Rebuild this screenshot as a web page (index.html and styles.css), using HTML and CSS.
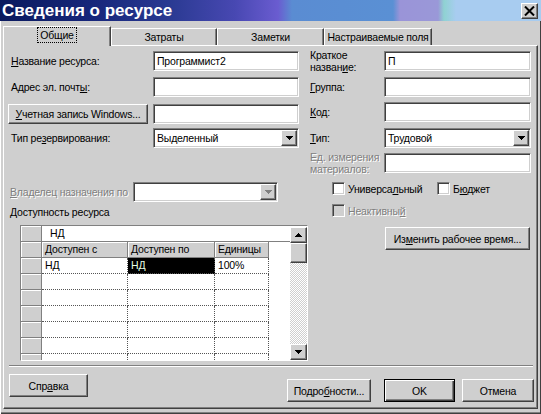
FILE: index.html
```html
<!DOCTYPE html>
<html lang="ru">
<head>
<meta charset="utf-8">
<title>Сведения о ресурсе</title>
<link rel="stylesheet" href="styles.css">
</head>
<body>
<div class="dialog">
  <div class="titlebar">
    <span class="title">Сведения о ресурсе</span>
    <span class="close raised"><svg width="11" height="10" viewBox="0 0 11 10"><path d="M1 0.5L10 9.5M10 0.5L1 9.5" stroke="#000" stroke-width="2"/></svg></span>
  </div>
  <div class="frame">
    <div class="tabs">
      <div class="tab active t1"><span class="focus">Общие</span></div>
      <div class="tab t2">Затраты</div>
      <div class="tab t3">Заметки</div>
      <div class="tab t4">Настраиваемые поля</div>
    </div>
    <div class="panel">
      <div class="content">
        <div class="col-left">
          <div class="form form-left">
            <span class="lbl"><span><u>Н</u>азвание ресурса:</span></span><div class="field"><span>Программист2</span></div>
            <span class="lbl"><span>Адрес эл. почт<u>ы</u>:</span></span><div class="field"></div>
            <span class="lbl"><span class="btn raised btn-win"><span><u>У</u>четная запись Windows...</span></span></span><div class="field"></div>
            <span class="lbl"><span>Тип ре<u>з</u>ервирования:</span></span><div class="field select"><span>Выделенный</span><span class="drop raised"><svg width="7" height="4" viewBox="0 0 7 4"><path d="M0 0h7v1H0zM1 1h5v1H1zM2 2h3v1H2zM3 3h1v1H3z"/></svg></span></div>
          </div>
          <div class="owner-row">
            <span class="owner-lbl disabled"><u>В</u>ладелец назначения по</span>
            <div class="field select owner-sel"><span class="drop raised"><svg width="7" height="4" viewBox="0 0 7 4"><path fill="#808080" d="M0 0h7v1H0zM1 1h5v1H1zM2 2h3v1H2zM3 3h1v1H3z"/></svg></span></div>
          </div>
          <div class="avail-label"><u>Д</u>оступность ресурса</div>
          <div class="avail">
            <div class="sheet">
              <div class="rh"></div><div class="editbar">НД</div>
              <div class="rh"></div><div class="hd">Доступен с</div><div class="hd">Доступен по</div><div class="hd">Единицы</div><div class="blank"></div>
              <div class="rh"></div><div class="cell">НД</div><div class="cell sel">НД</div><div class="cell">100%</div><div class="blank"></div>
              <div class="rh"></div><div class="cell"></div><div class="cell"></div><div class="cell"></div><div class="blank"></div>
              <div class="rh"></div><div class="cell"></div><div class="cell"></div><div class="cell"></div><div class="blank"></div>
              <div class="rh"></div><div class="cell"></div><div class="cell"></div><div class="cell"></div><div class="blank"></div>
              <div class="rh"></div><div class="cell"></div><div class="cell"></div><div class="cell"></div><div class="blank"></div>
              <div class="rh"></div><div class="cell"></div><div class="cell"></div><div class="cell"></div><div class="blank"></div>
              <div class="rh"></div><div class="cell"></div><div class="cell"></div><div class="cell"></div><div class="blank"></div>
            </div>
            <div class="vscroll">
              <span class="sb-btn raised"><svg width="7" height="4" viewBox="0 0 7 4"><path d="M3 0h1v1H3zM2 1h3v1H2zM1 2h5v1H1zM0 3h7v1H0z"/></svg></span>
              <span class="thumb raised"></span>
              <span class="track"></span>
              <span class="sb-btn raised"><svg width="7" height="4" viewBox="0 0 7 4"><path d="M0 0h7v1H0zM1 1h5v1H1zM2 2h3v1H2zM3 3h1v1H3z"/></svg></span>
            </div>
          </div>
        </div>
        <div class="col-right">
          <div class="form form-right">
            <span class="lbl two"><span>Краткое<br>назван<u>и</u>е:</span></span><div class="field"><span>П</span></div>
            <span class="lbl"><span><u>Г</u>руппа:</span></span><div class="field"></div>
            <span class="lbl"><span><u>К</u>од:</span></span><div class="field"></div>
            <span class="lbl"><span><u>Т</u>ип:</span></span><div class="field select"><span>Трудовой</span><span class="drop raised"><svg width="7" height="4" viewBox="0 0 7 4"><path d="M0 0h7v1H0zM1 1h5v1H1zM2 2h3v1H2zM3 3h1v1H3z"/></svg></span></div>
            <span class="lbl two disabled"><span>Ед. измерения<br>материалов:</span></span><div class="field"></div>
          </div>
          <div class="checks">
            <span class="check first"><span class="cb"></span><span>Универса<u>л</u>ьный</span></span>
            <span class="check"><span class="cb"></span><span>Б<u>ю</u>джет</span></span>
          </div>
          <div class="checks">
            <span class="check disabled"><span class="cb cb-dis"></span><span>Неактивны<u>й</u></span></span>
          </div>
          <div class="work-row"><span class="btn raised work"><span>Из<u>м</u>енить рабочее время...</span></span></div>
        </div>
      </div>
      <div class="separator"></div>
      <div class="buttons">
        <span class="btn raised b-help"><span>Спр<u>а</u>вка</span></span>
        <span class="btn raised b-more"><span>Подро<u>б</u>ности...</span></span>
        <span class="btn raised b-ok"><span>OK</span></span>
        <span class="btn raised b-cancel"><span>Отмена</span></span>
      </div>
    </div>
  </div>
</div>
</body>
</html>
```

FILE: styles.css
```css
* { box-sizing: border-box; }
html, body { margin: 0; padding: 0; }
body {
  width: 541px;
  height: 414px;
  overflow: hidden;
  background: #cfcfcf;
  font-family: "Liberation Sans", Arial, sans-serif;
  font-size: 10.5px;
  letter-spacing: -0.2px;
  color: #000;
}
u { text-decoration: underline; text-underline-offset: 1px; }

.dialog {
  width: 541px;
  height: 414px;
  display: flex;
  flex-direction: column;
  background: #cfcfcf;
}

/* title bar */
.titlebar {
  height: 21px;
  flex: none;
  display: flex;
  align-items: center;
  padding-left: 2px;
  background: linear-gradient(90deg, #0a1a5e 0, #16267a 90px, #2a3a92 170px, #4848b2 235px, #6a5cd0 278px, #5a8cd2 292px, #5a90d4 393px, #9a94d8 400px, #9a98d8 438px, #8fd2d2 444px, #a8ccf0 456px, #a8ccf0 541px);
}
.title {
  color: #fff;
  font-weight: bold;
  font-size: 17px;
  letter-spacing: 0;
  line-height: 21px;
}
.close {
  margin-left: auto;
  margin-right: 3px;
  width: 17px;
  height: 16px;
  display: flex;
  align-items: center;
  justify-content: center;
}

.raised {
  background: #cfcfcf;
  border: 1px solid;
  border-color: #fff #404040 #404040 #fff;
  box-shadow: inset -1px -1px 0 #808080;
}

.frame {
  flex: 1;
  padding: 0 3px;
  box-shadow: inset 1px 0 0 #fff, inset -1px 0 0 #404040, inset 0 -1px 0 #404040, inset 0 -2px 0 #808080;
}

/* tabs */
.tabs {
  height: 24px;
  display: flex;
  align-items: flex-end;
}
.tab {
  height: 17px;
  line-height: 16px;
  text-align: center;
  border-top: 1px solid #fff;
  border-left: 1px solid #fff;
  border-right: 1px solid #404040;
  box-shadow: inset -1px 0 0 #808080;
  white-space: nowrap;
}
.tab.active {
  height: 20px;
  line-height: 17px;
  margin-bottom: -1px;
  position: relative;
  z-index: 1;
  background: #cfcfcf;
}
.focus {
  outline: 1px dotted #000;
  outline-offset: 1px;
  padding: 0 1px;
}
.t1 { width: 108px; }
.t2 { width: 106px; }
.t3 { width: 107px; }
.t4 { width: 108px; }

/* panel */
.panel {
  height: 364px;
  border-top: 1px solid #fff;
  border-left: 1px solid #fff;
  border-right: 1px solid #404040;
  border-bottom: 1px solid #404040;
  box-shadow: inset -1px -1px 0 #808080;
  display: flex;
  flex-direction: column;
}
.content {
  display: grid;
  grid-template-columns: 306px 1fr;
  padding-top: 5px;
}
.col-left { padding-left: 7px; }

.form {
  display: grid;
  align-items: start;
}
.form-left {
  grid-template-columns: 142px 146px;
  grid-template-rows: 26px 27px 24px 20px;
}
.form-right {
  grid-template-columns: 74px 147px;
  grid-template-rows: 26px 25px 26px 25px 20px;
}
.lbl {
  height: 20px;
  display: flex;
  align-items: center;
  white-space: nowrap;
}
.lbl.two { line-height: 12px; }

.disabled {
  color: #808080;
  text-shadow: 1px 1px 0 #fff;
}

.field {
  height: 20px;
  background: #fff;
  border: 1px solid;
  border-color: #808080 #fff #fff #808080;
  box-shadow: inset 1px 1px 0 #404040, inset -1px -1px 0 #cfcfcf;
  padding: 1px 1px 1px 3px;
  display: flex;
  align-items: center;
  white-space: nowrap;
}
.select { justify-content: space-between; }
.drop {
  width: 16px;
  height: 16px;
  margin-left: auto;
  display: flex;
  align-items: center;
  justify-content: center;
}

.btn {
  display: flex;
  align-items: center;
  justify-content: center;
  white-space: nowrap;
}
.btn-win {
  margin-left: -3px;
  width: 140px;
  height: 20px;
}

.owner-row {
  display: flex;
  margin-top: 34px;
  margin-left: -1px;
  height: 20px;
  align-items: center;
}
.owner-lbl { width: 123px; white-space: nowrap; }
.owner-sel { width: 145px; }

.avail-label {
  margin-top: 4px;
  margin-left: -1px;
  line-height: 13px;
}

/* availability sheet */
.avail {
  margin-top: 6px;
  margin-left: 9px;
  width: 288px;
  height: 136px;
  border: 1px solid;
  border-color: #808080 #fff #fff #808080;
  background: #fff;
  display: flex;
  overflow: hidden;
}
.sheet {
  flex: 1;
  display: grid;
  grid-template-columns: 21px 86px 87px 54px 1fr;
  grid-auto-rows: 16px;
  align-content: start;
  line-height: 15px;
}
.rh {
  background: #cfcfcf;
  border-right: 1px solid #808080;
  border-bottom: 1px solid #808080;
  box-shadow: inset 1px 1px 0 #fff;
}
.editbar {
  grid-column: 2 / -1;
  padding-left: 8px;
  border-bottom: 1px solid #808080;
}
.hd {
  background: #cfcfcf;
  border-right: 1px solid #808080;
  border-bottom: 1px solid #808080;
  box-shadow: inset 1px 1px 0 #fff;
  padding-left: 3px;
  white-space: nowrap;
}
.cell {
  border-right: 1px dotted #555;
  border-bottom: 1px dotted #555;
  padding-left: 3px;
}
.cell.sel {
  background: #000;
  color: #e6ffe6;
}
.blank { background: #fff; }

.vscroll {
  width: 17px;
  flex: none;
  display: flex;
  flex-direction: column;
  padding-top: 1px;
}
.sb-btn {
  height: 16px;
  flex: none;
  display: flex;
  align-items: center;
  justify-content: center;
}
.thumb { height: 20px; flex: none; }
.track {
  flex: 1;
  background: repeating-conic-gradient(#fff 0 25%, #cfcfcf 0 50%) 0 0 / 2px 2px;
}

/* right column */
.checks {
  display: flex;
  align-items: center;
  margin-top: 9px;
  padding-left: 22px;
  height: 13px;
}
.check {
  display: flex;
  align-items: center;
  gap: 3px;
  white-space: nowrap;
}
.check.first { width: 105px; }
.cb {
  width: 13px;
  height: 13px;
  flex: none;
  background: #fff;
  border: 1px solid;
  border-color: #808080 #fff #fff #808080;
  box-shadow: inset 1px 1px 0 #404040, inset -1px -1px 0 #cfcfcf;
}
.cb-dis { background: #cfcfcf; }
.work-row { margin-top: 10px; padding-left: 75px; }
.work { width: 145px; height: 23px; }

/* bottom */
.separator {
  margin-top: 4px;
  margin-left: 5px;
  width: 524px;
  height: 2px;
  border-top: 1px solid #808080;
  border-bottom: 1px solid #fff;
}
.buttons {
  display: flex;
  align-items: flex-start;
  padding: 7px 3px 0 5px;
}
.b-help { width: 79px; height: 23px; }
.b-more { width: 84px; height: 23px; margin-left: auto; margin-top: 5px; }
.b-ok {
  width: 71px; height: 23px; margin-left: 13px; margin-top: 5px;
  border-color: #000;
  box-shadow: inset 1px 1px 0 #fff, inset -1px -1px 0 #404040, inset -2px -2px 0 #808080;
}
.b-cancel { width: 72px; height: 23px; margin-left: 7px; margin-top: 5px; }
```
